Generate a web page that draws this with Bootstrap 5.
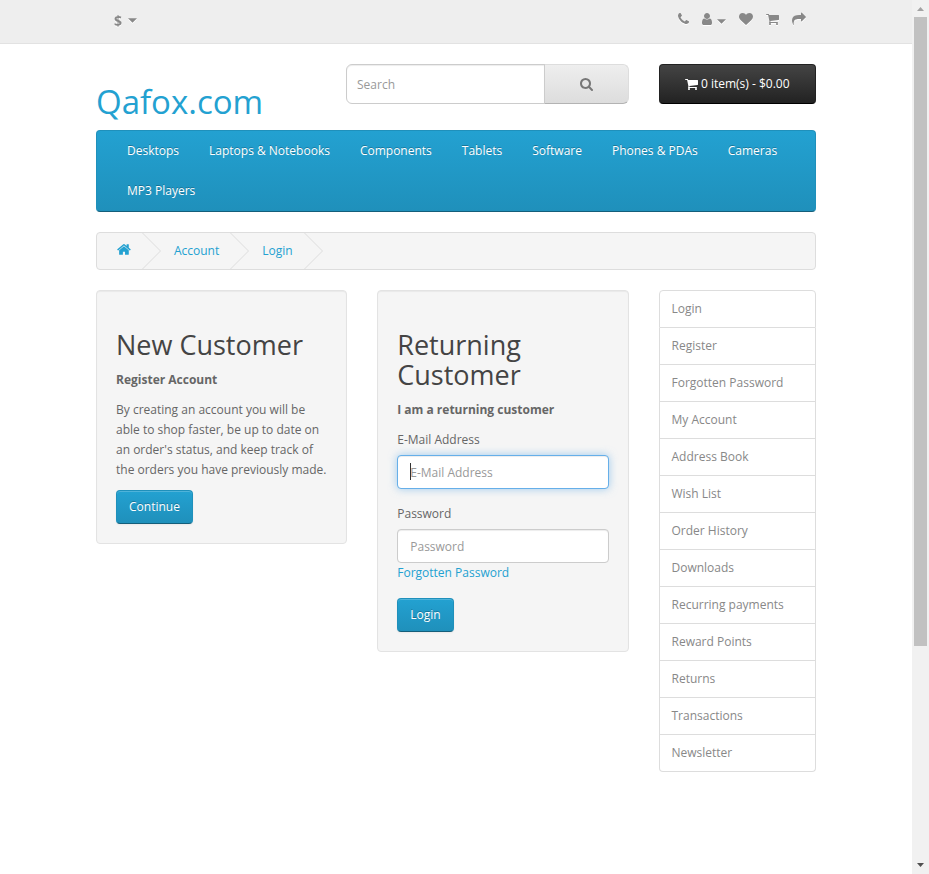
<!DOCTYPE html>
<html lang="en">
<head>
<meta charset="utf-8">
<meta name="viewport" content="width=device-width, initial-scale=1">
<title>Account Login</title>
<link href="https://cdn.jsdelivr.net/npm/bootstrap@5.3.0/dist/css/bootstrap.min.css" rel="stylesheet">
<style>
body { font-family: "Open Sans", sans-serif; font-size: 12px; line-height: 20px; color: #666; background: #fff; }
a { color: #23a1d1; text-decoration: none; }
.container { max-width: 750px; --bs-gutter-x: 30px; }
.row { --bs-gutter-x: 30px; }
h1, h2 { font-weight: 400; line-height: 1.1; }
.glyph { height: 14px; fill: currentColor; display: block; }
.caret { width: 9px; height: 5px; fill: currentColor; display: block; }

.topbar { background: #eee; border-bottom: 1px solid #e2e2e2; height: 44px; margin-bottom: 20px; }
.topbar a, .currency { color: #888; filter: drop-shadow(0 1px 0 #fff); }
.currency { border: 0; background: none; font-size: 14px; font-weight: 700; padding: 0 18px; gap: 6px; margin-bottom: 2px; }
.toplinks { gap: 13px; padding-right: 10px; margin: 0 0 5px; }
.toplinks a { gap: 5px; }

.logo { font-size: 33px; margin: 20px 0 10px; line-height: 36px; }
.search-group .form-control { height: 40px; font-size: 12px; line-height: 20px; padding: 0 10px; border-color: #ccc; border-radius: 6px; box-shadow: inset 0 1px 1px rgba(0,0,0,.075); color: #555; }
.form-control::placeholder { color: #999; }
.btn-search { width: 85px; color: #777; border: 1px solid; border-color: #ddd #ddd #b3b3b3 #b8b8b8; border-radius: 6px; background: linear-gradient(#eee, #ddd); }
.btn-cart { height: 40px; font-size: 12px; line-height: 18px; color: #fff; gap: 3px; border: 1px solid; border-color: #222 #222 #000; border-radius: 4px; background: linear-gradient(#444, #222); padding: 0; }

.mainmenu { border: 1px solid; border-color: #1f90bb #1f90bb #145e7a; border-radius: 4px; background: linear-gradient(#23a1d1, #1f90bb); padding: 0 15px; margin-bottom: 20px; }
.mainmenu .nav-link { color: #fff; padding: 10px 15px; text-shadow: 0 -1px 0 rgba(0,0,0,.25); }

.crumbs { border: 1px solid #ddd; border-radius: 4px; background: #f5f5f5; padding: 0 20px; margin-bottom: 20px; }
.crumbs li { gap: 11px; }
.crumbs ol { gap: 13px; }
.chevron { width: 19px; height: 36px; fill: none; stroke: #ddd; display: block; }
.crumbs .home { height: 15px; margin-bottom: 3px; }

.well { background: #f5f5f5; border: 1px solid #e3e3e3; border-radius: 4px; padding: 19px; box-shadow: inset 0 1px 1px rgba(0,0,0,.05); }
.well h2 { font-size: 27px; line-height: 30px; color: #444; margin: 20px 0 10px; }
.well p { margin-bottom: 10px; }
.well label { display: block; margin-bottom: 5px; }
.field { margin-bottom: 15px; }
.field .form-control { height: 34px; font-size: 12px; line-height: 20px; padding: 6px 12px; border-color: #ccc; border-radius: 4px; box-shadow: inset 0 1px 1px rgba(0,0,0,.075); color: #555; }
.field .form-control.is-active, .field .form-control:focus { border-color: #66afe9; box-shadow: inset 0 1px 1px rgba(0,0,0,.075), 0 0 8px rgba(102,175,233,.6); caret-color: transparent; }
.text-cursor { position: absolute; left: 13px; top: 8px; width: 1px; height: 17px; background: #333; z-index: 6; }
.btn-blue { height: 34px; font-size: 12px; line-height: 18px; padding: 7px 12px; color: #fff; border: 1px solid; border-color: #1f90bb #1f90bb #145e7a; border-radius: 4px; background: linear-gradient(#23a1d1, #1f90bb); box-shadow: inset 0 1px 0 rgba(255,255,255,.2), 0 1px 2px rgba(0,0,0,.05); text-shadow: 0 -1px 0 rgba(0,0,0,.25); }
.side .list-group-item { color: #888; border-color: #ddd; padding: 8px 12px; }
.side { --bs-list-group-border-radius: 4px; }

.scrolltrack { width: 17px; height: 100vh; background: #f1f1f1; }
.scrolltrack svg { width: 17px; height: 17px; display: block; flex: none; }
.thumb { flex: 629; background: #c1c1c1; margin: 0 2px; }
.rest { flex: 211; }
</style>
<script src="https://cdn.jsdelivr.net/npm/bootstrap@5.3.0/dist/js/bootstrap.bundle.min.js" defer></script>
</head>
<body>
<div class="d-flex">
<div class="flex-grow-1">
  <nav class="topbar" aria-label="Top">
    <div class="container d-flex justify-content-between align-items-center h-100">
      <button type="button" class="currency d-flex align-items-center">$ <svg class="caret" viewBox="0 0 8 4"><path d="M0 0h8l-4 4z"/></svg></button>
      <ul class="toplinks list-unstyled d-flex align-items-center">
        <li><a href="#" aria-label="Phone"><svg class="glyph" viewBox="192 0 1408 1792"><path d="M1600 1240q0 27-10 70.5t-21 68.5q-21 50-122 106-94 51-186 51-27 0-53-3.5t-57.5-12.5-47-14.5-55.5-20.5-49-18q-98-35-175-83-127-79-264-216t-216-264q-48-77-83-175-3-9-18-49t-20.5-55.5-14.5-47-12.500-57.500-3.500-53q0-92 51-186 56-101 106-122 25-11 68.500-21t70.500-10q14 0 21 3 18 6 53 76 11 19 30 54t35 63.500 31 53.500q3 4 17.500 25t21.500 35.500 7 28.500q0 20-28.500 50t-62 55-62 53-28.500 46q0 9 5 22.500t8.500 20.500 14 24 11.500 19q76 137 174 235t235 174q2 1 19 11.500t24 14 20.500 8.500 22.500 5q18 0 46-28.500t53-62 55-62 50-28.500q14 0 28.500 7t35.500 21.500 25 17.500q25 15 53.500 31t63.500 35 54 30q70 35 76 53 3 7 3 21z"/></svg></a></li>
        <li><a href="#" class="d-flex align-items-center" aria-label="My Account"><svg class="glyph" viewBox="256 0 1280 1792"><path d="M1536 1399q0 109-62.5 187t-150.5 78h-854q-88 0-150.5-78t-62.5-187q0-85 8.5-160.5t31.5-152 58.5-131 94-89 134.5-34.5q131 128 313 128t313-128q76 0 134.5 34.5t94 89 58.5 131 31.5 152 8.5 160.5zm-256-887q0 159-112.5 271.5t-271.5 112.5-271.5-112.5-112.5-271.5 112.5-271.5 271.5-112.5 271.5 112.5 112.5 271.5z"/></svg><svg class="caret mt-1" viewBox="0 0 8 4"><path d="M0 0h8l-4 4z"/></svg></a></li>
        <li><a href="#" aria-label="Wish List"><svg class="glyph" viewBox="0 0 1792 1792"><path d="M896 1664q-26 0-44-18l-624-602q-10-8-27.5-26t-55.5-65.5-68-97.5-53.5-121-23.5-138q0-220 127-344t351-124q62 0 126.5 21.5t120 58 95.5 68.5 76 68q36-36 76-68t95.5-68.5 120-58 126.5-21.5q224 0 351 124t127 344q0 221-229 450l-623 600q-18 18-44 18z"/></svg></a></li>
        <li><a href="#" aria-label="Shopping Cart"><svg class="glyph" viewBox="64 0 1664 1792"><path id="cart-shape" d="M704 1536q0 52-38 90t-90 38-90-38-38-90 38-90 90-38 90 38 38 90zm896 0q0 52-38 90t-90 38-90-38-38-90 38-90 90-38 90 38 38 90zm128-1088v512q0 24-16.5 42.5t-40.5 21.5l-1044 122q13 60 13 70 0 16-24 64h920q26 0 45 19t19 45-19 45-45 19h-1024q-26 0-45-19t-19-45q0-11 8-31.5t16-36 21.5-40 15.5-29.5l-177-823h-204q-26 0-45-19t-19-45 19-45 45-19h256q16 0 28.5 6.5t19.5 15.5 13 24.5 8 26 5.5 29.5 4.5 26h1201q26 0 45 19t19 45z"/></svg></a></li>
        <li><a href="#" aria-label="Checkout"><svg class="glyph" viewBox="0 0 1792 1792"><path d="M1792 640q0 26-19 45l-512 512q-19 19-45 19t-45-19-19-45v-256h-224q-98 0-175.5 6t-154 21.5-133 42.5-105.5 69.5-80 101-48.5 138.5-17.5 181q0 55 5 123 0 6 2.5 23.5t2.5 26.5q0 15-8.5 25t-23.5 10q-16 0-28-17-7-9-13-22t-13.5-30-10.5-24q-127-285-127-451 0-199 53-333 162-403 875-403h224v-256q0-26 19-45t45-19 45 19l512 512q19 19 19 45z"/></svg></a></li>
      </ul>
    </div>
  </nav>

  <div class="container">
    <header class="row">
      <div class="col-4"><h1 class="logo"><a href="#">Qafox.com</a></h1></div>
      <div class="col-5">
        <form class="input-group search-group">
          <input type="search" class="form-control" placeholder="Search" aria-label="Search">
          <button type="button" class="btn-search d-flex align-items-center justify-content-center" aria-label="Search"><svg class="glyph" viewBox="64 0 1664 1792"><path d="M1216 832q0-185-131.5-316.5t-316.5-131.5-316.5 131.5-131.5 316.5 131.5 316.5 316.5 131.5 316.5-131.5 131.5-316.5zm512 832q0 52-38 90t-90 38q-54 0-90-38l-343-342q-179 124-399 124-143 0-273.5-55.5t-225-150-150-225-55.5-273.5 55.5-273.5 150-225 225-150 273.5-55.5 273.5 55.5 225 150 150 225 55.5 273.5q0 220-124 399l343 343q37 37 37 90z"/></svg></button>
        </form>
      </div>
      <div class="col-3">
        <button type="button" class="btn-cart w-100 d-flex align-items-center justify-content-center"><svg class="glyph" viewBox="64 0 1664 1792"><use href="#cart-shape"/></svg><span>0 item(s) - $0.00</span></button>
      </div>
    </header>

    <nav class="mainmenu" aria-label="Categories">
      <ul class="nav">
        <li><a class="nav-link" href="#">Desktops</a></li>
        <li><a class="nav-link" href="#">Laptops &amp; Notebooks</a></li>
        <li><a class="nav-link" href="#">Components</a></li>
        <li><a class="nav-link" href="#">Tablets</a></li>
        <li><a class="nav-link" href="#">Software</a></li>
        <li><a class="nav-link" href="#">Phones &amp; PDAs</a></li>
        <li><a class="nav-link" href="#">Cameras</a></li>
        <li><a class="nav-link" href="#">MP3 Players</a></li>
      </ul>
    </nav>

    <nav class="crumbs" aria-label="Breadcrumb">
      <ol class="list-unstyled d-flex mb-0">
        <li class="d-flex align-items-center"><a href="#" aria-label="Home"><svg class="glyph home" viewBox="64 0 1664 1792"><path d="M1472 992v480q0 26-19 45t-45 19h-384v-384h-256v384h-384q-26 0-45-19t-19-45v-480q0-1 .5-3t.5-3l575-474 575 474q1 2 1 6zm223-69l-62 74q-8 9-21 11h-3q-13 0-21-7l-692-577-692 577q-12 8-24 7-13-2-21-11l-62-74q-8-10-7-23.500t11-21.500l719-599q32-26 76-26t76 26l244 204v-195q0-14 9-23t23-9h192q14 0 23 9t9 23v408l219 182q10 8 11 21.500t-7 23.500z"/></svg></a><svg class="chevron" viewBox="0 0 19 36"><path d="M.5 0l18 18-18 18"/></svg></li>
        <li class="d-flex align-items-center"><a href="#">Account</a><svg class="chevron" viewBox="0 0 19 36"><path d="M.5 0l18 18-18 18"/></svg></li>
        <li class="d-flex align-items-center"><a href="#">Login</a><svg class="chevron" viewBox="0 0 19 36"><path d="M.5 0l18 18-18 18"/></svg></li>
      </ol>
    </nav>

    <div class="row">
      <main class="col-9">
        <div class="row align-items-start">
          <div class="col-6">
            <section class="well">
              <h2>New Customer</h2>
              <p><strong>Register Account</strong></p>
              <p>By creating an account you will be able to shop faster, be up to date on an order's status, and keep track of the orders you have previously made.</p>
              <a href="#" class="btn btn-blue">Continue</a>
            </section>
          </div>
          <div class="col-6">
            <section class="well">
              <h2>Returning Customer</h2>
              <p><strong>I am a returning customer</strong></p>
              <form>
                <div class="field">
                  <label for="email">E-Mail Address</label>
                  <div class="position-relative">
                    <input type="text" id="email" class="form-control is-active" placeholder="E-Mail Address" autofocus>
                    <span class="text-cursor"></span>
                  </div>
                </div>
                <div class="field">
                  <label for="password">Password</label>
                  <input type="password" id="password" class="form-control" placeholder="Password">
                  <a href="#" class="d-block">Forgotten Password</a>
                </div>
                <button type="button" class="btn btn-blue">Login</button>
              </form>
            </section>
          </div>
        </div>
      </main>
      <aside class="col-3">
        <div class="list-group side">
          <a href="#" class="list-group-item">Login</a>
          <a href="#" class="list-group-item">Register</a>
          <a href="#" class="list-group-item">Forgotten Password</a>
          <a href="#" class="list-group-item">My Account</a>
          <a href="#" class="list-group-item">Address Book</a>
          <a href="#" class="list-group-item">Wish List</a>
          <a href="#" class="list-group-item">Order History</a>
          <a href="#" class="list-group-item">Downloads</a>
          <a href="#" class="list-group-item">Recurring payments</a>
          <a href="#" class="list-group-item">Reward Points</a>
          <a href="#" class="list-group-item">Returns</a>
          <a href="#" class="list-group-item">Transactions</a>
          <a href="#" class="list-group-item">Newsletter</a>
        </div>
      </aside>
    </div>
  </div>
</div>
<div class="scrolltrack d-flex flex-column sticky-top" aria-hidden="true">
  <svg viewBox="0 0 17 17"><path fill="#a3a3a3" d="M5 11l3.500-4 3.500 4z"/></svg>
  <div class="thumb"></div>
  <div class="rest"></div>
  <svg viewBox="0 0 17 17"><path fill="#505050" d="M5 6h7l-3.500 4z"/></svg>
</div>
</div>
</body>
</html>
